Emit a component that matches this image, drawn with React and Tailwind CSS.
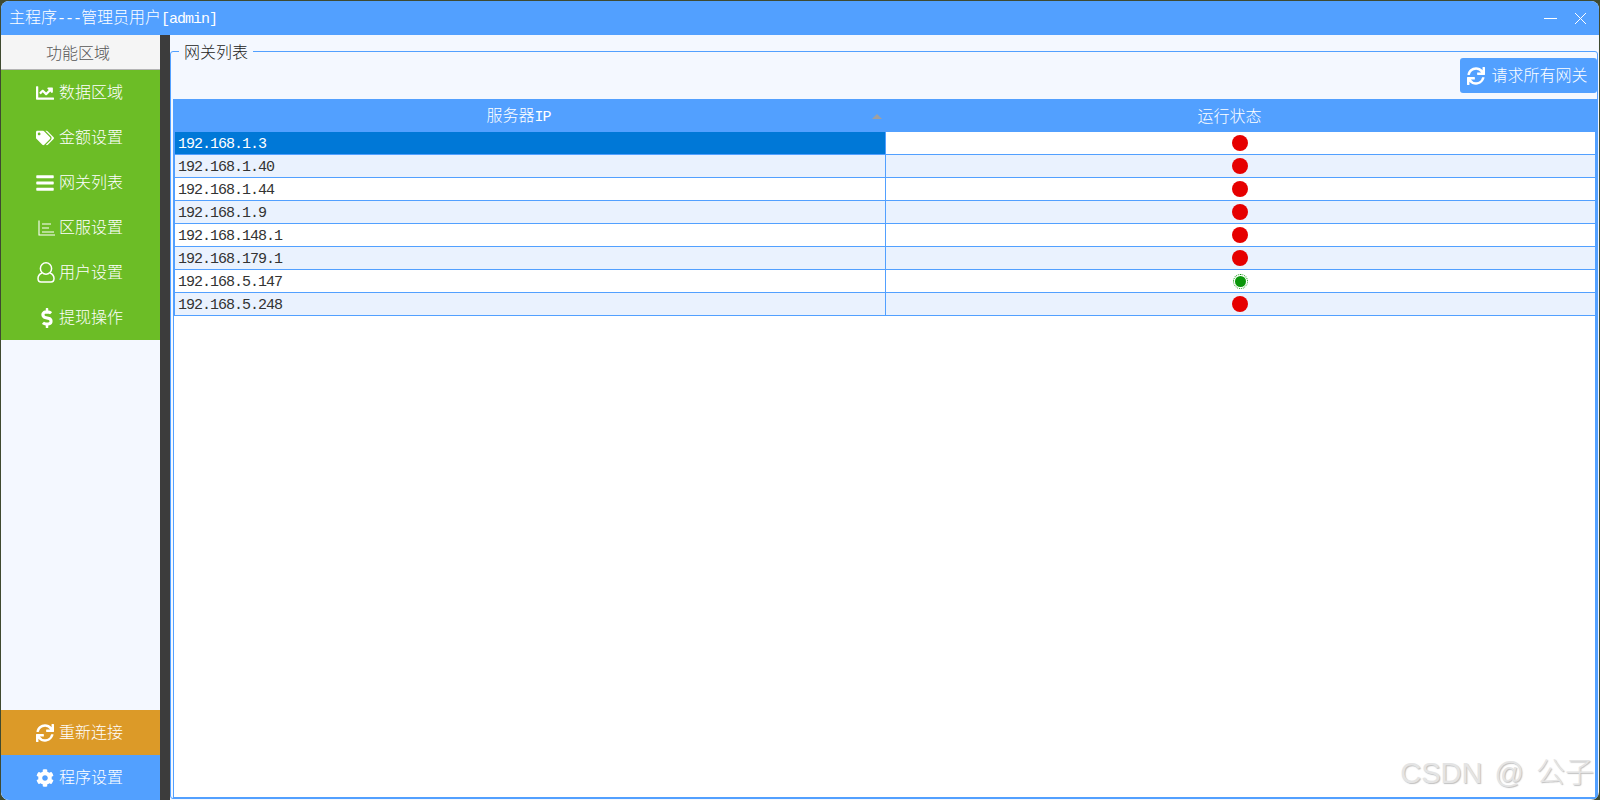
import React from "react";
import { FaChartLine, FaTags, FaBars, FaDollarSign, FaSync, FaCog } from "react-icons/fa";

const CJK = "font-['Noto_Sans_CJK_SC',sans-serif]";
const L = ({ children }) => (
  <span className="font-['Liberation_Mono',monospace] text-[15px] tracking-[-1px]">{children}</span>
);

const AxisBars = () => (
  <svg width="17" height="16" viewBox="0 0 17 16" fill="none" stroke="currentColor" strokeWidth="1.1">
    <path d="M1 0.5v14.5h16" />
    <path d="M4 4h9M4 8h7M4 12h12" />
  </svg>
);

const UserO = () => (
  <svg width="18" height="21" viewBox="0 0 18 21" fill="none" stroke="currentColor" strokeWidth="1.5">
    <ellipse cx="9" cy="6.5" rx="5.6" ry="5.7" />
    <path d="M5 11C2.5 12 1 13.5 1 16.5c0 2 1 3.5 3 3.5h10c2 0 3-1.5 3-3.5 0-3-1.5-4.5-4-5.5" />
  </svg>
);

const menu = [
  { t: "数据区域", I: FaChartLine, c: "text-[18px]" },
  { t: "金额设置", I: FaTags, c: "text-[18px]" },
  { t: "网关列表", I: FaBars, c: "text-[20px] ml-[-1px]" },
  { t: "区服设置", I: AxisBars, c: "ml-[2px]" },
  { t: "用户设置", I: UserO, c: "ml-px" },
  { t: "提现操作", I: FaDollarSign, c: "text-[20px] ml-[1px]" },
];

const rows = [
  ["192.168.1.3", 0],
  ["192.168.1.40", 0],
  ["192.168.1.44", 0],
  ["192.168.1.9", 0],
  ["192.168.148.1", 0],
  ["192.168.179.1", 0],
  ["192.168.5.147", 1],
  ["192.168.5.248", 0],
];

function NavItem({ icon: I, text, className = "", iconClass = "text-[18px]" }) {
  return (
    <div className={`flex h-[45px] items-center pl-[35px] text-base text-white ${className}`}>
      <span className="flex w-[23px] shrink-0 items-center">
        <span className={`flex items-center ${iconClass}`}><I /></span>
      </span>
      <span className="pb-[4px] font-light">{text}</span>
    </div>
  );
}

export default function App() {
  return (
    <div className={`relative h-[800px] w-[1600px] overflow-hidden bg-[#3f4a30] pt-px pr-px pl-px ${CJK}`}>
      <div className="flex h-[799px] flex-col overflow-hidden rounded-lg bg-[#f4f8ff]">
        {/* title bar */}
        <div className="flex h-[34px] shrink-0 items-center justify-between bg-[#52a0ff] pl-[8px] pr-[12px] text-white">
          <div className="pb-[2px] text-base font-light leading-none">
            主程序<L>---</L>管理员用户<L>[admin]</L>
          </div>
          <div className="flex items-center gap-[17px]">
            <svg width="13" height="13" viewBox="0 0 13 13" stroke="white" strokeWidth="1"><path d="M0 6.5h13" /></svg>
            <svg width="13" height="13" viewBox="0 0 13 13" stroke="white" strokeWidth="1" fill="none"><path d="M1 1l11 11M12 1L1 12" /></svg>
          </div>
        </div>

        <div className="flex min-h-0 flex-1">
          {/* sidebar */}
          <aside className="flex w-[159px] shrink-0 flex-col bg-[#f4f8ff]">
            <div className="flex h-[35px] items-center justify-center border-b border-[#b4b4b4] bg-[#f5f5f5] pr-[5px] text-base font-light text-[#555]">
              功能区域
            </div>
            <div className="bg-[#6cbd26]">
              {menu.map((m) => (
                <NavItem key={m.t} icon={m.I} text={m.t} iconClass={m.c} />
              ))}
            </div>
            <div className="mt-auto">
              <NavItem icon={FaSync} text="重新连接" className="bg-[#dc9a28]" />
              <NavItem icon={FaCog} text="程序设置" className="bg-[#52a0ff]" />
            </div>
          </aside>

          <div className="w-[10px] shrink-0 bg-[#3c3c3c]" />

          {/* content */}
          <main className="flex min-w-0 flex-1 flex-col pr-px">
            <fieldset className="mt-[9px] mb-px flex min-h-0 flex-1 flex-col rounded-[3px] border border-[#52a0ff] pl-[2px]">
              <legend className="ml-[6px] h-[14px] px-[5px] text-base font-light leading-[14px] text-[#222]">
                网关列表
              </legend>
              <div className="flex h-[41px] shrink-0 items-start justify-end">
                <button className="flex h-[35px] w-[137px] items-center justify-center gap-[6px] rounded-[3px] bg-[#52a0ff] pr-[2px] text-base font-light text-white">
                  <FaSync className="text-[18px]" />
                  <span className="pb-[4px]">请求所有网关</span>
                </button>
              </div>
              <div className="flex min-h-0 flex-1 flex-col border-b border-l border-r-2 border-[#52a0ff] bg-white">
                <div className="-ml-px -mr-[2px] flex h-[33px] shrink-0 bg-[#52a0ff] text-base font-light text-white">
                  <div className="relative flex w-[713px] items-center justify-center pr-[22px]">
                    <span>服务器<L>IP</L></span>
                    <span className="absolute right-[4px] top-[15px] h-0 w-0 border-x-[5px] border-b-[5px] border-x-transparent border-b-[#a0a0a0]" />
                  </div>
                  <div className="flex flex-1 items-center justify-center pr-[24px] pb-[2px]">运行状态</div>
                </div>
                {rows.map(([ip, ok], i) => (
                  <div
                    key={ip}
                    className={`flex h-[23px] shrink-0 border-b border-l border-[#52a0ff] ${i % 2 ? "bg-[#eaf2fe]" : "bg-white"} ${i === 0 ? "text-white" : "text-[#333]"}`}
                  >
                    <div className={`flex w-[711px] items-center border-r border-[#52a0ff] pt-[4px] pl-[3px] ${i === 0 ? "bg-[#0078d7]" : ""}`}>
                      <L>{ip}</L>
                    </div>
                    <div className="flex flex-1 items-center justify-center pr-px">
                      {ok ? (
                        <span className="flex h-[15px] w-[15px] items-center justify-center rounded-full border border-dotted border-[#0a960a]">
                          <span className="h-[11px] w-[11px] rounded-full bg-[#0a960a]" />
                        </span>
                      ) : (
                        <span className="h-4 w-4 rounded-full bg-[#e60000]" />
                      )}
                    </div>
                  </div>
                ))}
              </div>
            </fieldset>
          </main>
        </div>
      </div>

      {/* watermark */}
      <div className="absolute bottom-[12px] right-[6px] font-['Liberation_Sans','Noto_Sans_CJK_SC',sans-serif] text-[29px] font-light leading-none text-[#e4e4e4] [word-spacing:4px] [text-shadow:1px_1px_1px_rgba(130,130,130,0.5)]">
        CSDN @ 公子
      </div>
    </div>
  );
}
